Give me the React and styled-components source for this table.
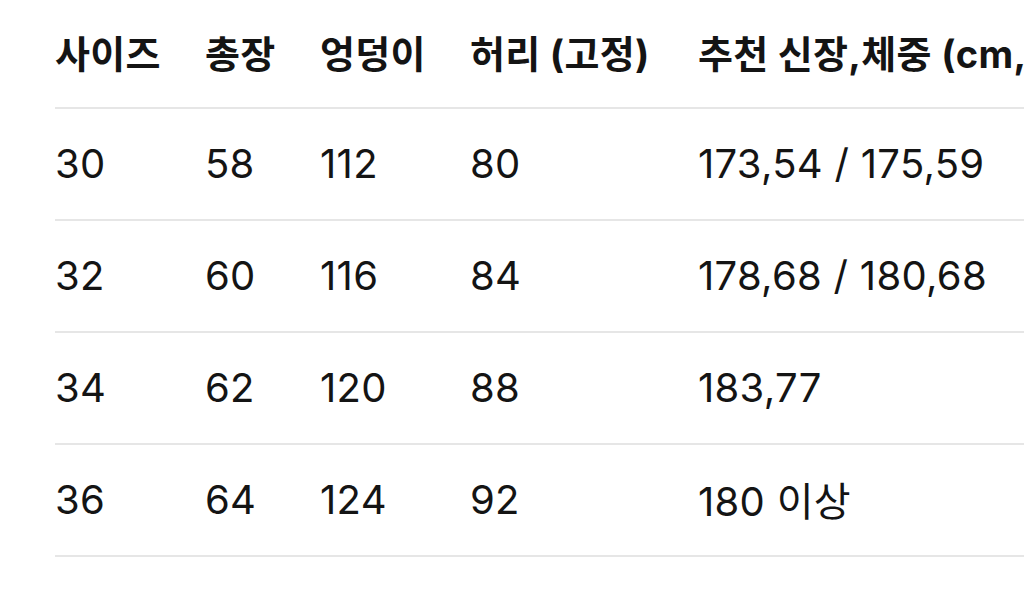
import React from "react";
import styled, { createGlobalStyle } from "styled-components";

const GlobalStyle = createGlobalStyle`
  html, body {
    margin: 0;
    padding: 0;
    background: #fff;
    overflow: hidden;
  }
  body {
    font-family: "Inter", "Noto Sans CJK KR", sans-serif;
    color: #111;
  }
`;

const Page = styled.div`
  width: 1024px;
  height: 594px;
  overflow: hidden;
  padding-left: 55px;
  box-sizing: border-box;
`;

const Table = styled.div`
  width: 1300px;
  display: grid;
  grid-template-columns: 150px 115px 150px 228px 1fr;
`;

const Cell = styled.div`
  height: ${(p) => (p.head ? "109px" : "112px")};
  display: flex;
  align-items: center;
  border-bottom: 2px solid #e6e6e6;
  font-size: ${(p) => (p.head ? "38px" : "40px")};
  font-weight: ${(p) => (p.head ? 700 : 400)};
  letter-spacing: ${(p) => (p.head ? "0.3px" : "0.3px")};
  white-space: nowrap;
  padding-bottom: ${(p) => (p.head ? "4px" : "2px")};
  box-sizing: border-box;
  color: #141414;
`;

const headers = ["사이즈", "총장", "엉덩이", "허리 (고정)", "추천 신장,체중 (cm,kg)"];

const rows = [
  ["30", "58", "112", "80", "173,54 / 175,59"],
  ["32", "60", "116", "84", "178,68 / 180,68"],
  ["34", "62", "120", "88", "183,77"],
  ["36", "64", "124", "92", "180 이상"],
];

export default function App() {
  return (
    <>
      <GlobalStyle />
      <Page>
        <Table>
          {headers.map((h, i) => (
            <Cell head key={"h" + i}>
              {h}
            </Cell>
          ))}
          {rows.map((row, r) =>
            row.map((v, c) => <Cell key={r + "-" + c}>{v}</Cell>)
          )}
        </Table>
      </Page>
    </>
  );
}
